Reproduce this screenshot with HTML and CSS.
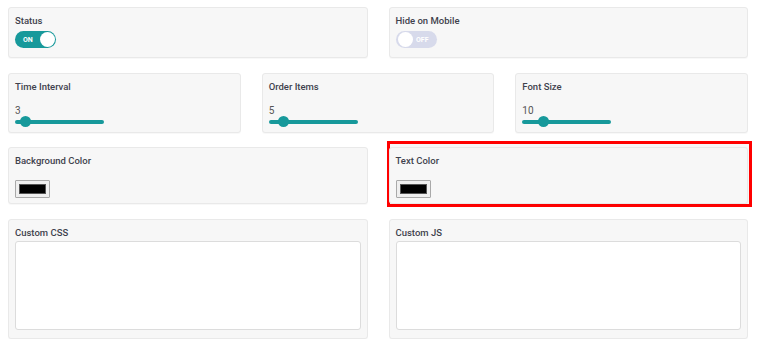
FILE: index.html
```html
<!DOCTYPE html>
<html lang="en">

<head>
    <meta charset="UTF-8">
    <meta name="viewport" content="width=device-width, initial-scale=1.0">
    <title>Widget Settings</title>
    <link rel="stylesheet" href="styles.css">
</head>

<body>
    <div class="settings">
        <div class="row row-2">
            <div class="card card-toggle">
                <label class="label">Status</label>
                <span class="toggle on"><span class="toggle-text">ON</span><span class="knob"></span></span>
            </div>
            <div class="card card-toggle">
                <label class="label">Hide on Mobile</label>
                <span class="toggle off"><span class="knob"></span><span class="toggle-text">OFF</span></span>
            </div>
        </div>

        <div class="row row-3">
            <div class="card card-range">
                <label class="label" for="timeInterval">Time Interval</label>
                <div class="value">3</div>
                <input type="range" id="timeInterval" min="1" max="33" value="3">
            </div>
            <div class="card card-range">
                <label class="label" for="orderItems">Order Items</label>
                <div class="value">5</div>
                <input type="range" id="orderItems" min="1" max="36" value="5">
            </div>
            <div class="card card-range">
                <label class="label" for="fontSize">Font Size</label>
                <div class="value">10</div>
                <input type="range" id="fontSize" min="0" max="50" value="10">
            </div>
        </div>

        <div class="row row-2">
            <div class="card card-color">
                <label class="label" for="bgColor">Background Color</label>
                <input type="color" id="bgColor" value="#000000">
            </div>
            <div class="card card-color highlight">
                <label class="label" for="textColor">Text Color</label>
                <input type="color" id="textColor" value="#000000">
            </div>
        </div>

        <div class="row row-2">
            <div class="card card-code">
                <label class="label" for="customCss">Custom CSS</label>
                <textarea id="customCss"></textarea>
            </div>
            <div class="card card-code">
                <label class="label" for="customJs">Custom JS</label>
                <textarea id="customJs"></textarea>
            </div>
        </div>
    </div>
</body>

</html>
```

FILE: styles.css
```css
body {
    margin: 0;
    font-family: Roboto, Arial, sans-serif;
    background-color: #fff;
}

.settings {
    padding: 7px 11px 0 8px;
    display: flex;
    flex-direction: column;
    gap: 14.6px;
}

.row {
    display: grid;
    gap: 21px;
}

.row-2 {
    grid-template-columns: 1fr 1fr;
}

.row-3 {
    grid-template-columns: 1fr 1fr 1fr;
}

.card {
    position: relative;
    display: flex;
    flex-direction: column;
    align-items: flex-start;
    padding: 7px 6px 0 6px;
    background-color: #f7f7f7;
    border: 1px solid #e9e9e9;
    border-radius: 3px;
    box-shadow: 0 1px 1px rgba(0, 0, 0, 0.03);
}

.label {
    font-size: 9.5px;
    line-height: 12px;
    font-weight: 500;
    color: #3f424d;
}

/* toggles */
.card-toggle {
    height: 51px;
    box-sizing: border-box;
}

.toggle {
    margin-top: 4px;
    width: 41px;
    height: 17px;
    border-radius: 9px;
    display: flex;
    align-items: center;
    box-sizing: border-box;
}

.toggle.on {
    background-color: #17999b;
    padding: 0 1px 0 8px;
    justify-content: space-between;
}

.toggle.off {
    background-color: #d7daeb;
    padding: 0 8px 0 2px;
    justify-content: space-between;
}

.toggle-text {
    font-size: 7px;
    font-weight: 700;
    color: #fff;
}

.knob {
    width: 15px;
    height: 15px;
    border-radius: 50%;
    background-color: #fff;
}

/* sliders */
.card-range {
    height: 60px;
    box-sizing: border-box;
}

.value {
    margin-top: 12px;
    font-size: 10px;
    line-height: 12px;
    color: #555;
}

.card-range input[type="range"] {
    -webkit-appearance: none;
    appearance: none;
    margin: 0;
    width: 89px;
    height: 10px;
    background: transparent;
}

.card-range input[type="range"]::-webkit-slider-runnable-track {
    height: 4px;
    border-radius: 2px;
    background-color: #17999b;
}

.card-range input[type="range"]::-webkit-slider-thumb {
    -webkit-appearance: none;
    width: 11px;
    height: 11px;
    margin-top: -3.5px;
    border-radius: 50%;
    background-color: #17999b;
    border: none;
}

/* colour pickers */
.card-color {
    height: 57px;
    box-sizing: border-box;
}

.card-color input[type="color"] {
    -webkit-appearance: none;
    margin-top: 13px;
    width: 35px;
    height: 18px;
    padding: 3px;
    border: 1px solid #a9a9a9;
    border-radius: 1px;
    background-color: #efefef;
    box-sizing: border-box;
}

.card-color input[type="color"]::-webkit-color-swatch-wrapper {
    padding: 0;
}

.card-color input[type="color"]::-webkit-color-swatch {
    border: 1px solid #555;
}

.highlight::before {
    content: "";
    position: absolute;
    top: -7px;
    left: -3px;
    right: -5px;
    bottom: -4px;
    z-index: -1;
    border: 3px solid #f00;
    background-color: #f7f7f7;
}

/* code boxes */
.card-code {
    height: 120px;
    box-sizing: border-box;
    align-items: stretch;
}

.card-code textarea {
    margin-top: 2px;
    height: 89px;
    box-sizing: border-box;
    border: 1px solid #dcdcdc;
    border-radius: 3px;
    background-color: #fff;
    resize: none;
}
```
